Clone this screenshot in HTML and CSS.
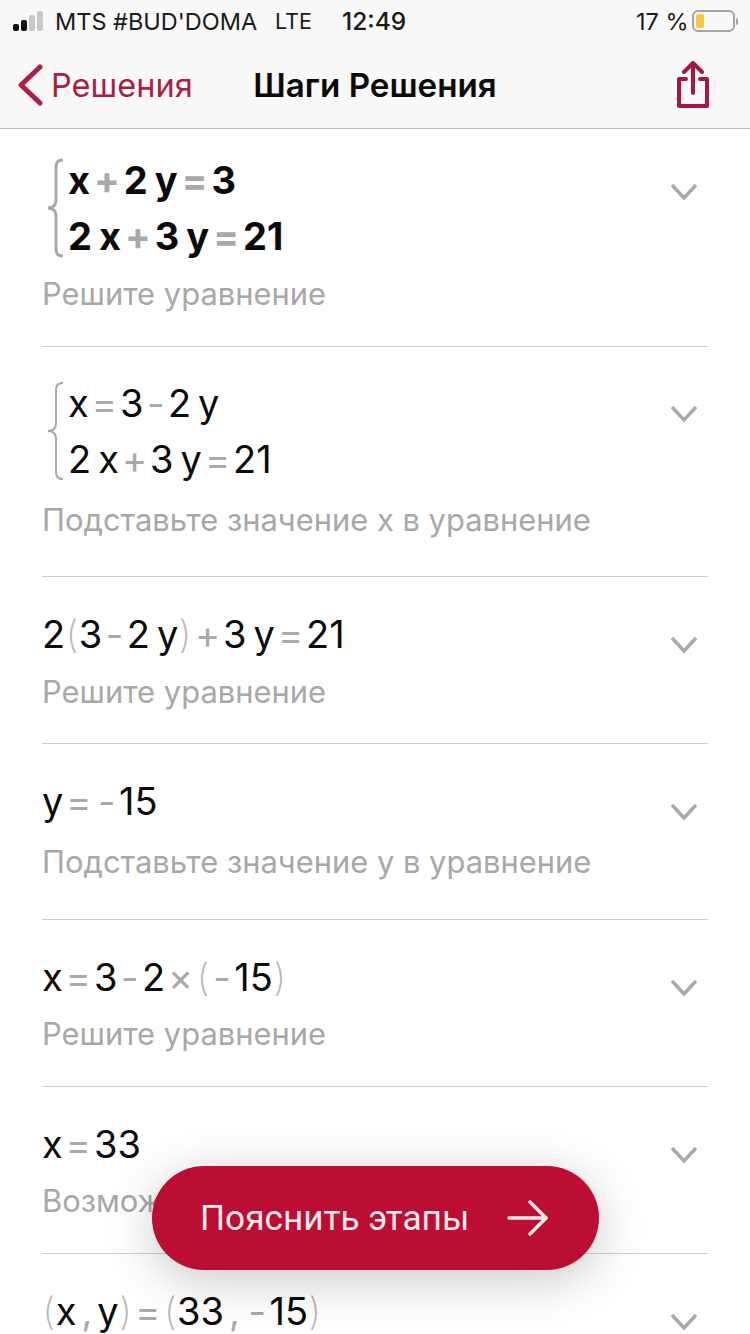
FILE: index.html
```html
<!DOCTYPE html>
<html lang="ru">
<head>
    <meta charset="UTF-8">
    <title>Шаги Решения</title>
    <link rel="stylesheet" href="styles.css">
</head>
<body>
    <header class="top">
        <div class="status">
            <div class="signal"><i class="on"></i><i class="on"></i><i></i><i></i></div>
            <span class="carrier">MTS #BUD'DOMA</span>
            <span class="net">LTE</span>
            <span class="time">12:49</span>
            <span class="percent">17 %</span>
            <div class="battery"><i></i></div>
            <div class="battery-cap"></div>
        </div>
        <nav class="nav">
            <a class="back" href="#">
                <svg width="26" height="42" viewBox="0 0 26 42"><path d="M23 3 L4 21 L23 39" fill="none" stroke="#b01e45" stroke-width="5" stroke-linecap="round" stroke-linejoin="round"/></svg>
                <span>Решения</span>
            </a>
            <div class="title">Шаги Решения</div>
            <a class="share" href="#">
                <svg width="34" height="48" viewBox="0 0 34 48"><g fill="none" stroke="#a6173f" stroke-width="4" stroke-linecap="round" stroke-linejoin="round"><path d="M10 18 H3 V45 H31 V18 H24"/><path d="M17 32 V3"/><path d="M8 11 L17 2 L26 11"/></g></svg>
            </a>
        </nav>
    </header>

    <main class="steps">
        <section class="step step-1">
            <div class="body">
                <div class="system bold">
                    <svg class="brace" width="22" height="100" viewBox="0 0 22 100"><path d="M20 2 C14 2 13 5 13 10 V42 C13 47 10 50 5 50 C10 50 13 53 13 58 V90 C13 95 14 98 20 98" fill="none" stroke="#a8a8a8" stroke-width="3"/></svg>
                    <div class="lines">
                        <div class="math">x<b class="op">+</b>2<s></s>y<b class="op">=</b>3</div>
                        <div class="math">2<s></s>x<b class="op">+</b>3<s></s>y<b class="op">=</b>21</div>
                    </div>
                </div>
                <p class="hint">Решите уравнение</p>
            </div>
            <svg class="chev" width="28" height="18" viewBox="0 0 28 18"><path d="M2 2 L14 15 L26 2" fill="none" stroke="#a9a9a9" stroke-width="3.5"/></svg>
        </section>

        <section class="step step-2">
            <div class="body">
                <div class="system">
                    <svg class="brace" width="22" height="100" viewBox="0 0 22 100"><path d="M20 2 C14 2 13 5 13 10 V42 C13 47 10 50 5 50 C10 50 13 53 13 58 V90 C13 95 14 98 20 98" fill="none" stroke="#a8a8a8" stroke-width="2"/></svg>
                    <div class="lines">
                        <div class="math">x<b class="op">=</b>3<b class="op minus">-</b>2<s></s>y</div>
                        <div class="math">2<s></s>x<b class="op">+</b>3<s></s>y<b class="op">=</b>21</div>
                    </div>
                </div>
                <p class="hint">Подставьте значение x в уравнение</p>
            </div>
            <svg class="chev" width="28" height="18" viewBox="0 0 28 18"><path d="M2 2 L14 15 L26 2" fill="none" stroke="#a9a9a9" stroke-width="3.5"/></svg>
        </section>

        <section class="step step-3">
            <div class="body">
                <div class="math">2<b class="par">(</b>3<b class="op minus">-</b>2<s></s>y<b class="par">)</b><b class="op">+</b>3<s></s>y<b class="op">=</b>21</div>
                <p class="hint">Решите уравнение</p>
            </div>
            <svg class="chev" width="28" height="18" viewBox="0 0 28 18"><path d="M2 2 L14 15 L26 2" fill="none" stroke="#a9a9a9" stroke-width="3.5"/></svg>
        </section>

        <section class="step step-4">
            <div class="body">
                <div class="math">y<b class="op">=</b><b class="op minus">-</b>15</div>
                <p class="hint">Подставьте значение y в уравнение</p>
            </div>
            <svg class="chev" width="28" height="18" viewBox="0 0 28 18"><path d="M2 2 L14 15 L26 2" fill="none" stroke="#a9a9a9" stroke-width="3.5"/></svg>
        </section>

        <section class="step step-5">
            <div class="body">
                <div class="math">x<b class="op">=</b>3<b class="op minus">-</b>2<b class="op">×</b><b class="par">(</b><b class="op minus">-</b>15<b class="par">)</b></div>
                <p class="hint">Решите уравнение</p>
            </div>
            <svg class="chev" width="28" height="18" viewBox="0 0 28 18"><path d="M2 2 L14 15 L26 2" fill="none" stroke="#a9a9a9" stroke-width="3.5"/></svg>
        </section>

        <section class="step step-6">
            <div class="body">
                <div class="math">x<b class="op">=</b>33</div>
                <p class="hint">Возможные решения</p>
            </div>
            <svg class="chev" width="28" height="18" viewBox="0 0 28 18"><path d="M2 2 L14 15 L26 2" fill="none" stroke="#a9a9a9" stroke-width="3.5"/></svg>
        </section>

        <section class="step step-7">
            <div class="body">
                <div class="math"><b class="par">(</b>x<b class="op wide">,</b>y<b class="par">)</b><b class="op">=</b><b class="par">(</b>33<b class="op wide">,</b><b class="op minus">-</b>15<b class="par">)</b></div>
            </div>
            <svg class="chev" width="28" height="18" viewBox="0 0 28 18"><path d="M2 2 L14 15 L26 2" fill="none" stroke="#a9a9a9" stroke-width="3.5"/></svg>
        </section>
    </main>

    <a class="explain" href="#">
        <span>Пояснить этапы</span>
        <svg width="42" height="38" viewBox="0 0 42 38"><g fill="none" stroke="#fbe9ee" stroke-width="3.5" stroke-linecap="round" stroke-linejoin="round"><path d="M2 19 H39"/><path d="M23 3 L39 19 L23 35"/></g></svg>
    </a>
</body>
</html>
```

FILE: styles.css
```css
* {
    margin: 0;
    padding: 0;
    box-sizing: border-box;
}

html, body {
    height: 1334px;
    overflow: hidden;
}

body {
    font-family: Inter, "Liberation Sans", sans-serif;
    background-color: #fff;
    color: #0b0b0b;
    position: relative;
}

a {
    text-decoration: none;
    color: inherit;
}

/* header */
.top {
    height: 129px;
    background: #f8f8f8;
    border-bottom: 1px solid #b9b9b9;
}

.status {
    height: 42px;
    display: flex;
    align-items: center;
    padding-left: 13px;
    font-size: 23.5px;
    color: #1a1a1a;
}

.signal {
    display: flex;
    align-items: flex-end;
    gap: 2px;
    width: 42px;
}

.signal i {
    width: 6px;
    height: 20px;
    background: #c8c8c8;
    border-radius: 2px;
}

.signal i.on {
    background: #111;
}

.signal i:nth-child(1) { height: 7px; }
.signal i:nth-child(2) { height: 11px; }
.signal i:nth-child(3) { height: 16px; }

.carrier {
    width: 220px;
}

.net {
    width: 67px;
    font-size: 21.5px;
}

.time {
    width: 294px;
    font-size: 24.5px;
    font-weight: 500;
}

.percent {
    width: 56px;
}

.battery {
    width: 43px;
    height: 22px;
    border: 2px solid #a5a5a5;
    border-radius: 6px;
    padding: 2px;
}

.battery i {
    display: block;
    width: 8px;
    height: 100%;
    background: #f7c843;
    border-radius: 2px;
}

.battery-cap {
    width: 2px;
    height: 7px;
    margin-left: 1px;
    background: #a5a5a5;
    border-radius: 0 2px 2px 0;
}

.nav {
    display: grid;
    grid-template-columns: 1fr auto 1fr;
    align-items: center;
    height: 86px;
    padding: 0 17px;
}

.back {
    display: flex;
    align-items: center;
    gap: 8px;
    color: #a81f45;
    font-size: 32.5px;
}

.title {
    font-size: 33.2px;
    font-weight: 600;
}

.share {
    justify-self: end;
    display: flex;
    margin-right: 23px;
}

/* steps */
.step {
    display: flex;
    justify-content: space-between;
    align-items: flex-start;
    margin: 0 42px;
    border-bottom: 1px solid #cfcfcf;
}

.step-1 { height: 218px; padding-top: 28px; }
.step-2 { height: 230px; padding-top: 33px; }
.step-3 { height: 167px; padding-top: 34px; }
.step-4 { height: 176px; padding-top: 34px; }
.step-5 { height: 167px; padding-top: 34px; }
.step-6 { height: 167px; padding-top: 34px; }
.step-7 { border-bottom: none; padding-top: 34px; }

.step-1 .chev { margin-top: 26px; }
.step-2 .chev { margin-top: 25px; }
.step-3 .chev, .step-4 .chev, .step-5 .chev, .step-6 .chev, .step-7 .chev { margin-top: 25px; }

.step-1 .hint { margin-top: 17px; }
.step-2 .hint { margin-top: 20px; }
.step-3 .hint { margin-top: 17px; }
.step-4 .hint { margin-top: 20px; }

.chev {
    margin-right: 10px;
}

.system {
    display: flex;
    align-items: center;
    gap: 1px;
}

.brace {
    margin-left: 1px;
    flex-shrink: 0;
}

.lines {
    display: flex;
    flex-direction: column;
    gap: 10px;
    margin-left: 2px;
}

.math {
    font-size: 38px;
    line-height: 46px;
    white-space: nowrap;
}

.bold .math {
    font-weight: 700;
}

.math s {
    display: inline-block;
    width: 7px;
}

.math .op {
    color: #a9a9a9;
    font-weight: 400;
    margin: 0 3px;
}

.bold .math .op {
    font-weight: 700;
    margin: 0 4px;
}

.math .minus {
    margin: 0 3.5px;
}

.math .wide {
    margin: 0 5px;
}

.math .par {
    color: #b4b4b4;
    font-weight: 200;
    margin: 0 0.5px;
}

.hint {
    font-size: 30.9px;
    line-height: 36px;
    color: #a8a8a8;
    margin-top: 16px;
}

/* floating button */
.explain {
    position: absolute;
    left: 152px;
    top: 1166px;
    width: 447px;
    height: 104px;
    display: flex;
    align-items: center;
    justify-content: space-between;
    padding: 0 50px 0 48px;
    background: #bc0d32;
    color: #fbe9ee;
    font-family: Roboto, "Liberation Sans", sans-serif;
    font-size: 35.2px;
    border-radius: 52px;
    box-shadow: 0 10px 50px rgba(0, 0, 0, 0.22);
}
```
